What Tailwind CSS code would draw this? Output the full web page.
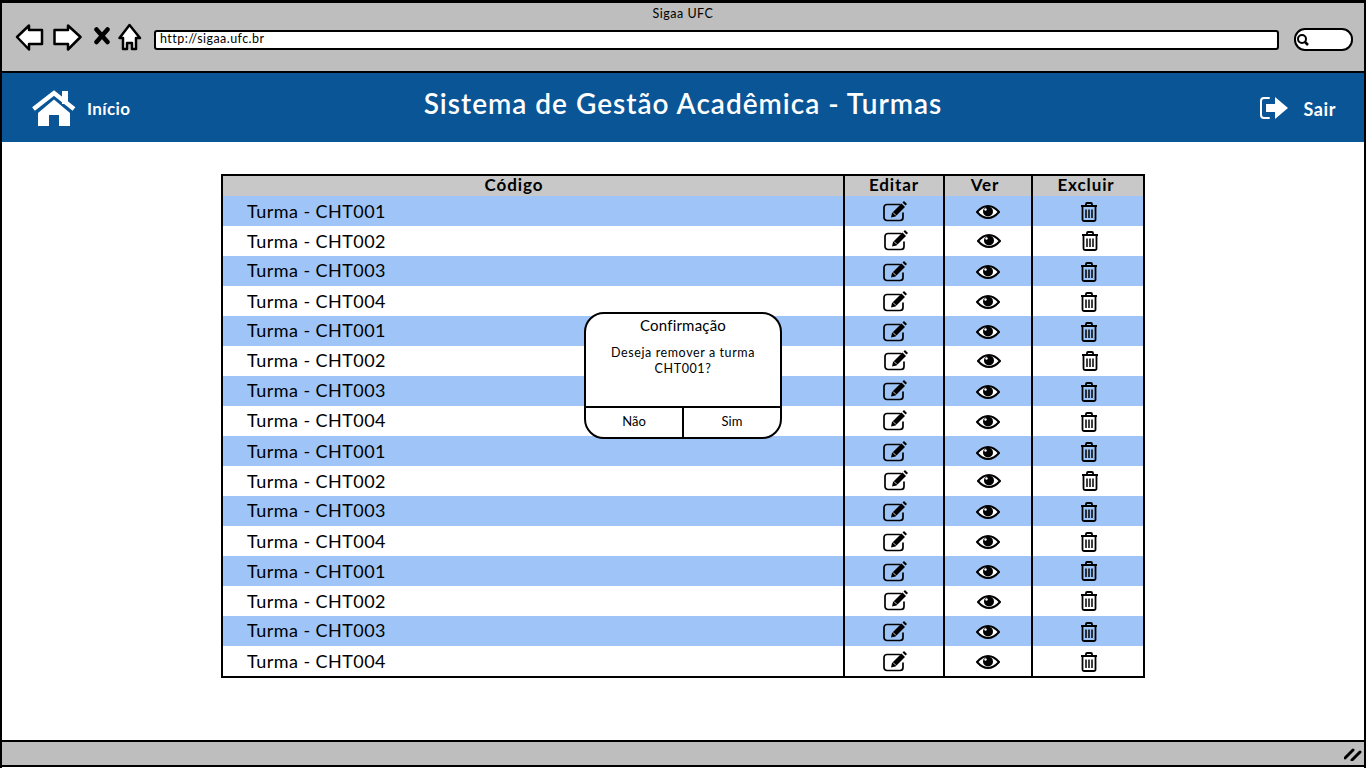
<!DOCTYPE html>
<html lang="pt-BR">
<head>
<meta charset="utf-8">
<title>Sigaa UFC</title>
<script src="https://cdn.jsdelivr.net/npm/@tailwindcss/browser@4"></script>
</head>
<body class="bg-white">
<svg width="0" height="0" class="absolute">
  <symbol id="edit" viewBox="-1 0 26 22">
    <path d="M21 13v4.500a3 3 0 0 1-3 3H5a3 3 0 0 1-3-3V7.500a3 3 0 0 1 3-3h13" fill="none" stroke="#000" stroke-width="1.700" stroke-linecap="round"/>
    <path d="M9 17.500l1-4.500 9.500-9.500 3.500 3.500-9.500 9.500z" fill="#000"/>
    <path d="M20.500 2.500l1.500-1.500 3 3-1.500 1.500z" fill="#000"/>
    <path d="M11 12.500l3 3" stroke="#fff" stroke-width="0.800"/>
  </symbol>
  <symbol id="eye" viewBox="0 0 24 14">
    <path d="M1 7C5 2.500 8.500 1 12 1s7 1.500 11 6c-4 4.500-7.500 6-11 6S5 11.500 1 7z" fill="#fff" stroke="#000" stroke-width="2"/>
    <circle cx="12" cy="6.500" r="5" fill="#000"/>
    <circle cx="9.500" cy="4.500" r="1.200" fill="#fff"/>
  </symbol>
  <symbol id="trash" viewBox="0 0 18 20">
    <path d="M1 4h16M6 4V2a1 1 0 0 1 1-1h4a1 1 0 0 1 1 1v2" fill="none" stroke="#000" stroke-width="1.800"/>
    <path d="M2.500 4.500v13a1.500 1.500 0 0 0 1.500 1.500h10a1.500 1.500 0 0 0 1.500-1.500v-13" fill="none" stroke="#000" stroke-width="1.800"/>
    <path d="M6 7.500v8.500M9 7.500v8.500M12 7.500v8.500" stroke="#000" stroke-width="1.500"/>
  </symbol>
</svg>

<div class="relative flex h-[768px] w-[1366px] flex-col overflow-hidden border-x-2 border-black font-['Lato','Open_Sans',sans-serif] text-black">
  <!-- browser bar -->
  <header class="h-[73px] shrink-0 border-t-[3px] border-b-2 border-black bg-[#bebebe]">
    <p class="pt-[3px] text-center text-[12.500px] leading-[15px] tracking-[0.5px] text-black">Sigaa UFC</p>
    <div class="mt-[2px] flex items-center pl-[12px]">
      <svg width="30" height="28" viewBox="0 0 30 28" class="shrink-0"><path d="M3 14 15 2.500V7h13v14H15v5.500z" fill="#fff" stroke="#000" stroke-width="2.500" stroke-linejoin="round"/></svg>
      <svg width="30" height="28" viewBox="0 0 30 28" class="ml-[8px] shrink-0"><path d="M28.500 14 16 2.500V7H2.500v14H16v5.500z" fill="#fff" stroke="#000" stroke-width="2.500" stroke-linejoin="round"/></svg>
      <svg width="18" height="22" viewBox="0 0 18 22" class="ml-[10px] shrink-0"><path d="M4.500 3.500l11 12.500M15.500 3.500 4.500 16" stroke="#000" stroke-width="4.500" stroke-linecap="round"/></svg>
      <svg width="24" height="28" viewBox="0 0 24 28" class="ml-[8px] shrink-0"><path d="M11.500 2 22 15h-4v11h-4v-6h-5v6H5V15H1.500z" fill="#fff" stroke="#000" stroke-width="2.500" stroke-linejoin="round"/></svg>
      <div class="mt-[5px] ml-[12px] flex h-[20px] w-[1125px] items-center rounded-[3px] border-2 border-black bg-white pl-[4px] text-[12.500px] leading-none tracking-[0.45px]">http://sigaa.ufc.br</div>
      <div class="mt-[5px] ml-[15px] flex h-[23px] w-[59px] items-center rounded-[11px] border-2 border-black bg-white">
        <svg width="16" height="14" viewBox="0 0 16 14"><circle cx="6" cy="6" r="4" fill="none" stroke="#000" stroke-width="2"/><path d="M9 9l3 3" stroke="#000" stroke-width="2.500"/></svg>
      </div>
    </div>
  </header>

  <!-- app header -->
  <nav class="-mx-[2px] flex h-[69px] shrink-0 items-center bg-[#0a5596] text-white">
    <div class="flex w-[300px] items-center pl-[32px]">
      <svg width="44" height="38" viewBox="0 0 44 38" class="shrink-0"><path d="M1.500 20 22 4l20 16" fill="none" stroke="#fff" stroke-width="4.500"/><path d="M30 2h6v13h-6z" fill="#fff"/><path d="M6 24 22 10.500 38 24v13H27V26H17v11H6z" fill="#fff"/></svg>
      <span class="mt-[2px] ml-[11px] text-[17px] font-bold tracking-[0.4px]">Início</span>
    </div>
    <h1 class="-mt-[10px] flex-1 text-center text-[28px] font-semibold tracking-[1px]">Sistema de Gestão Acadêmica - Turmas</h1>
    <div class="flex w-[300px] items-center justify-end pr-[30px]">
      <svg width="30" height="24" viewBox="0 0 30 24" class="shrink-0"><path d="M10 2H5a3 3 0 0 0-3 3v14a3 3 0 0 0 3 3h5" fill="none" stroke="#fff" stroke-width="2" stroke-linecap="round"/><path d="M7 8h9V1l13 11-13 11v-7H7z" fill="#fff"/></svg>
      <span class="mt-[3px] ml-[14px] text-[18px] font-bold tracking-[0.6px]">Sair</span>
    </div>
  </nav>

  <!-- table -->
  <main class="min-h-0 flex-1 pt-[32px] pl-[219px]">
    <div class="w-[924px] border-2 border-black text-[18px] tracking-[0.45px]">
      <div class="grid h-[20px] grid-cols-[620px_100px_88px_112px] bg-[#c8c8c8] text-center text-[17px] leading-[17px] font-bold tracking-[0.9px]">
        <div class="pr-[38px]">Código</div><div class="border-l-2 border-black">Editar</div><div class="border-l-2 border-black pr-[6px]">Ver</div><div class="border-l-2 border-black pr-[4px]">Excluir</div>
      </div>
      <div class="grid h-[30px] grid-cols-[620px_100px_88px_112px] items-stretch bg-[#9ec4f8]"><div class="flex items-center pl-[24px]">Turma - CHT001</div><div class="flex items-center justify-center border-l-2 border-black"><svg width="26" height="22"><use href="#edit"/></svg></div><div class="flex items-center justify-center border-l-2 border-black"><svg width="24" height="14" class="mt-[2px]"><use href="#eye"/></svg></div><div class="flex items-center justify-center border-l-2 border-black"><svg width="18" height="20" class="mt-[2px] ml-[2px]"><use href="#trash"/></svg></div></div>
      <div class="grid h-[30px] grid-cols-[620px_100px_88px_112px] items-stretch bg-white"><div class="flex items-center pl-[24px]">Turma - CHT002</div><div class="flex items-center justify-center border-l-2 border-black"><svg width="26" height="22" class="-mt-[2px] ml-[2px]"><use href="#edit"/></svg></div><div class="flex items-center justify-center border-l-2 border-black"><svg width="24" height="14" class="ml-[2px]"><use href="#eye"/></svg></div><div class="flex items-center justify-center border-l-2 border-black"><svg width="18" height="20" class="ml-[4px]"><use href="#trash"/></svg></div></div>
      <div class="grid h-[30px] grid-cols-[620px_100px_88px_112px] items-stretch bg-[#9ec4f8]"><div class="-mt-[2px] flex items-center pl-[24px]">Turma - CHT003</div><div class="flex items-center justify-center border-l-2 border-black"><svg width="26" height="22"><use href="#edit"/></svg></div><div class="flex items-center justify-center border-l-2 border-black"><svg width="24" height="14" class="mt-[2px]"><use href="#eye"/></svg></div><div class="flex items-center justify-center border-l-2 border-black"><svg width="18" height="20" class="mt-[2px] ml-[2px]"><use href="#trash"/></svg></div></div>
      <div class="grid h-[30px] grid-cols-[620px_100px_88px_112px] items-stretch bg-white"><div class="flex items-center pl-[24px]">Turma - CHT004</div><div class="flex items-center justify-center border-l-2 border-black"><svg width="26" height="22"><use href="#edit"/></svg></div><div class="flex items-center justify-center border-l-2 border-black"><svg width="24" height="14" class="mt-[2px]"><use href="#eye"/></svg></div><div class="flex items-center justify-center border-l-2 border-black"><svg width="18" height="20" class="mt-[2px] ml-[2px]"><use href="#trash"/></svg></div></div>
      <div class="grid h-[30px] grid-cols-[620px_100px_88px_112px] items-stretch bg-[#9ec4f8]"><div class="-mt-[2px] flex items-center pl-[24px]">Turma - CHT001</div><div class="flex items-center justify-center border-l-2 border-black"><svg width="26" height="22"><use href="#edit"/></svg></div><div class="flex items-center justify-center border-l-2 border-black"><svg width="24" height="14" class="mt-[2px]"><use href="#eye"/></svg></div><div class="flex items-center justify-center border-l-2 border-black"><svg width="18" height="20" class="mt-[2px] ml-[2px]"><use href="#trash"/></svg></div></div>
      <div class="grid h-[30px] grid-cols-[620px_100px_88px_112px] items-stretch bg-white"><div class="-mt-[2px] flex items-center pl-[24px]">Turma - CHT002</div><div class="flex items-center justify-center border-l-2 border-black"><svg width="26" height="22" class="-mt-[2px] ml-[2px]"><use href="#edit"/></svg></div><div class="flex items-center justify-center border-l-2 border-black"><svg width="24" height="14" class="ml-[2px]"><use href="#eye"/></svg></div><div class="flex items-center justify-center border-l-2 border-black"><svg width="18" height="20" class="ml-[4px]"><use href="#trash"/></svg></div></div>
      <div class="grid h-[30px] grid-cols-[620px_100px_88px_112px] items-stretch bg-[#9ec4f8]"><div class="-mt-[2px] flex items-center pl-[24px]">Turma - CHT003</div><div class="flex items-center justify-center border-l-2 border-black"><svg width="26" height="22" class="-mt-[2px]"><use href="#edit"/></svg></div><div class="flex items-center justify-center border-l-2 border-black"><svg width="24" height="14" class="mt-[2px]"><use href="#eye"/></svg></div><div class="flex items-center justify-center border-l-2 border-black"><svg width="18" height="20" class="mt-[2px] ml-[2px]"><use href="#trash"/></svg></div></div>
      <div class="grid h-[30px] grid-cols-[620px_100px_88px_112px] items-stretch bg-white"><div class="-mt-[2px] flex items-center pl-[24px]">Turma - CHT004</div><div class="flex items-center justify-center border-l-2 border-black"><svg width="26" height="22" class="-mt-[2px]"><use href="#edit"/></svg></div><div class="flex items-center justify-center border-l-2 border-black"><svg width="24" height="14" class="mt-[2px]"><use href="#eye"/></svg></div><div class="flex items-center justify-center border-l-2 border-black"><svg width="18" height="20" class="mt-[2px] ml-[2px]"><use href="#trash"/></svg></div></div>
      <div class="grid h-[30px] grid-cols-[620px_100px_88px_112px] items-stretch bg-[#9ec4f8]"><div class="flex items-center pl-[24px]">Turma - CHT001</div><div class="flex items-center justify-center border-l-2 border-black"><svg width="26" height="22"><use href="#edit"/></svg></div><div class="flex items-center justify-center border-l-2 border-black"><svg width="24" height="14" class="mt-[4px]"><use href="#eye"/></svg></div><div class="flex items-center justify-center border-l-2 border-black"><svg width="18" height="20" class="mt-[2px] ml-[2px]"><use href="#trash"/></svg></div></div>
      <div class="grid h-[30px] grid-cols-[620px_100px_88px_112px] items-stretch bg-white"><div class="flex items-center pl-[24px]">Turma - CHT002</div><div class="flex items-center justify-center border-l-2 border-black"><svg width="26" height="22" class="-mt-[2px] ml-[2px]"><use href="#edit"/></svg></div><div class="flex items-center justify-center border-l-2 border-black"><svg width="24" height="14" class="ml-[2px]"><use href="#eye"/></svg></div><div class="flex items-center justify-center border-l-2 border-black"><svg width="18" height="20" class="ml-[4px]"><use href="#trash"/></svg></div></div>
      <div class="grid h-[30px] grid-cols-[620px_100px_88px_112px] items-stretch bg-[#9ec4f8]"><div class="-mt-[2px] flex items-center pl-[24px]">Turma - CHT003</div><div class="flex items-center justify-center border-l-2 border-black"><svg width="26" height="22"><use href="#edit"/></svg></div><div class="flex items-center justify-center border-l-2 border-black"><svg width="24" height="14" class="mt-[2px]"><use href="#eye"/></svg></div><div class="flex items-center justify-center border-l-2 border-black"><svg width="18" height="20" class="mt-[2px] ml-[2px]"><use href="#trash"/></svg></div></div>
      <div class="grid h-[30px] grid-cols-[620px_100px_88px_112px] items-stretch bg-white"><div class="flex items-center pl-[24px]">Turma - CHT004</div><div class="flex items-center justify-center border-l-2 border-black"><svg width="26" height="22"><use href="#edit"/></svg></div><div class="flex items-center justify-center border-l-2 border-black"><svg width="24" height="14" class="mt-[2px]"><use href="#eye"/></svg></div><div class="flex items-center justify-center border-l-2 border-black"><svg width="18" height="20" class="mt-[2px] ml-[2px]"><use href="#trash"/></svg></div></div>
      <div class="grid h-[30px] grid-cols-[620px_100px_88px_112px] items-stretch bg-[#9ec4f8]"><div class="flex items-center pl-[24px]">Turma - CHT001</div><div class="flex items-center justify-center border-l-2 border-black"><svg width="26" height="22"><use href="#edit"/></svg></div><div class="flex items-center justify-center border-l-2 border-black"><svg width="24" height="14" class="mt-[2px]"><use href="#eye"/></svg></div><div class="flex items-center justify-center border-l-2 border-black"><svg width="18" height="20" class="ml-[2px]"><use href="#trash"/></svg></div></div>
      <div class="grid h-[30px] grid-cols-[620px_100px_88px_112px] items-stretch bg-white"><div class="flex items-center pl-[24px]">Turma - CHT002</div><div class="flex items-center justify-center border-l-2 border-black"><svg width="26" height="22" class="-mt-[2px] ml-[2px]"><use href="#edit"/></svg></div><div class="flex items-center justify-center border-l-2 border-black"><svg width="24" height="14" class="mt-[2px] ml-[2px]"><use href="#eye"/></svg></div><div class="flex items-center justify-center border-l-2 border-black"><svg width="18" height="20" class="ml-[2px]"><use href="#trash"/></svg></div></div>
      <div class="grid h-[30px] grid-cols-[620px_100px_88px_112px] items-stretch bg-[#9ec4f8]"><div class="-mt-[2px] flex items-center pl-[24px]">Turma - CHT003</div><div class="flex items-center justify-center border-l-2 border-black"><svg width="26" height="22"><use href="#edit"/></svg></div><div class="flex items-center justify-center border-l-2 border-black"><svg width="24" height="14" class="mt-[2px]"><use href="#eye"/></svg></div><div class="flex items-center justify-center border-l-2 border-black"><svg width="18" height="20" class="mt-[2px] ml-[2px]"><use href="#trash"/></svg></div></div>
      <div class="grid h-[30px] grid-cols-[620px_100px_88px_112px] items-stretch bg-white"><div class="flex items-center pl-[24px]">Turma - CHT004</div><div class="flex items-center justify-center border-l-2 border-black"><svg width="26" height="22"><use href="#edit"/></svg></div><div class="flex items-center justify-center border-l-2 border-black"><svg width="24" height="14" class="mt-[2px]"><use href="#eye"/></svg></div><div class="flex items-center justify-center border-l-2 border-black"><svg width="18" height="20" class="mt-[2px] ml-[2px]"><use href="#trash"/></svg></div></div>
    </div>
  </main>

  <!-- status bar -->
  <footer class="mb-[1px] flex h-[27px] shrink-0 items-center justify-end border-y-2 border-black bg-[#bebebe] pr-[2px]">
    <svg width="18" height="14" viewBox="0 0 18 14"><path d="M1 11 9 3M8 13l8-8" stroke="#000" stroke-width="3" stroke-linecap="round"/></svg>
  </footer>

  <!-- modal -->
  <div class="absolute top-[312px] left-[582px] flex h-[127px] w-[198px] flex-col rounded-[20px] border-2 border-black bg-white text-center">
    <p class="pt-[1px] text-[15px] leading-[20px] tracking-[0.2px]">Confirmação</p>
    <p class="mt-[10px] h-[61px] px-[2px] text-[12.500px] leading-[16px] tracking-[0.6px]">Deseja remover a turma<br>CHT001?</p>
    <div class="grid flex-1 grid-cols-[96px_1fr] border-t-2 border-black text-[13px]">
      <div class="flex items-center justify-center pb-[2px]">Não</div>
      <div class="flex items-center justify-center border-l-2 border-black pb-[2px]">Sim</div>
    </div>
  </div>
</div>
</body>
</html>
